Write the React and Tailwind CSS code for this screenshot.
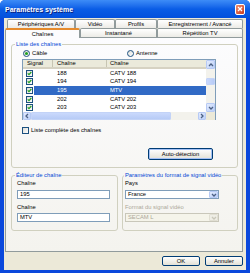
import React from 'react';

const Chevron = ({ dir, color = '#4d6185' }) => {
    const pts = { up: '1,4 3,2 5,4', down: '1,2 3,4 5,2', left: '4,1 2,3 4,5', right: '2,1 4,3 2,5' }[dir];
    return (
        <svg width="6" height="6" viewBox="0 0 6 6">
            <polyline points={pts} fill="none" stroke={color} strokeWidth="1.3" />
        </svg>
    );
};

const ScrollBtn = ({ dir, className }) => (
    <div className={`flex items-center justify-center rounded-[1px] border border-[#b7caf5] bg-gradient-to-br from-[#e3ebfd] to-[#bcd0f8] ${className}`}>
        <Chevron dir={dir} />
    </div>
);

const CheckBox = ({ checked }) => (
    <div className="w-[7px] h-[7px] shrink-0 border border-[#1c5180] bg-gradient-to-br from-[#dcdcd7] to-white flex items-center justify-center">
        {checked && (
            <svg width="5" height="5" viewBox="0 0 5 5">
                <polyline points="0.7,2.3 2,3.7 4.3,1" fill="none" stroke="#21a121" strokeWidth="1.2" />
            </svg>
        )}
    </div>
);

const Radio = ({ checked }) => (
    <div className="w-[7px] h-[7px] shrink-0 rounded-full border border-[#1c5180] bg-gradient-to-br from-[#dcdcd7] to-white flex items-center justify-center">
        {checked && <div className="w-[3px] h-[3px] rounded-full bg-[#21a121]" />}
    </div>
);

const Tab = ({ label, w, selected }) => (
    <div
        className={`${w} flex items-center justify-center rounded-t-[2px] border border-b-0 border-[#919b9c] ${selected
            ? 'relative z-10 h-[10px] -mb-[1px] border-t-2 border-t-[#e68b2c] bg-[#fcfcfe]'
            : 'h-[9px] bg-gradient-to-b from-white to-[#ecebe6]'}`}
    >
        {label}
    </div>
);

const Button = ({ label, w, focused }) => (
    <div
        className={`${w} h-full flex items-center justify-center rounded-[2px] border border-[#003c74] bg-gradient-to-b from-white to-[#e3e1d6] ${focused ? 'shadow-[inset_0_0_0_1px_#a4c1f5]' : ''}`}
    >
        {label}
    </div>
);

const rows = [
    { n: '188', name: 'CATV 188' },
    { n: '194', name: 'CATV 194' },
    { n: '195', name: 'MTV', sel: true },
    { n: '202', name: 'CATV 202' },
    { n: '203', name: 'CATV 203' },
];

const ChannelTable = () => (
    <div className="mt-[2px] w-[194px] h-[61px] border border-[#7f9db9] bg-white flex flex-col">
        <div className="flex flex-1">
            <div className="flex-1 flex flex-col">
                {/* header */}
                <div className="h-[9px] flex bg-[#ebeadb] border-b-2 border-[#d6d2c2]">
                    <div className="w-[30px] pl-[4px] border-r border-[#c7c5b2] flex items-center">Signal</div>
                    <div className="w-[54px] pl-[4px] border-r border-[#c7c5b2] flex items-center">Chaîne</div>
                    <div className="flex-1 pl-[3px] flex items-center">Chaîne</div>
                </div>
                {rows.map(r => (
                    <div key={r.n} className={`h-[8.6px] flex ${r.sel ? 'text-white' : ''}`}>
                        <div className="w-[30px] flex items-center">
                            <div className="pl-[3px] pr-[1px] bg-white h-full flex items-center">
                                <CheckBox checked />
                            </div>
                            <div className={`flex-1 h-full ${r.sel ? 'bg-[#316ac5]' : ''}`} />
                        </div>
                        <div className={`w-[54px] pl-[4px] flex items-center ${r.sel ? 'bg-[#316ac5]' : ''}`}>{r.n}</div>
                        <div className={`flex-1 pl-[3px] flex items-center ${r.sel ? 'bg-[#316ac5]' : ''}`}>{r.name}</div>
                    </div>
                ))}
            </div>
            {/* vertical scrollbar */}
            <div className="w-[9px] flex flex-col bg-[#f3f2ec]">
                <ScrollBtn dir="up" className="h-[9px]" />
                <div className="flex-1 flex flex-col pt-[9px]">
                    <div className="h-[7px] rounded-[1px] border border-[#c3d3f7] bg-gradient-to-r from-[#cad9fc] to-[#b7cbf6]" />
                </div>
                <ScrollBtn dir="down" className="h-[8.6px]" />
            </div>
        </div>
        {/* horizontal scrollbar */}
        <div className="h-[8px] flex bg-[#f3f2ec]">
            <ScrollBtn dir="left" className="w-[8px]" />
            <div className="flex-1 flex">
                <div className="w-[140px] rounded-[1px] border border-[#c3d3f7] bg-gradient-to-b from-[#cad9fc] to-[#b7cbf6]" />
            </div>
            <ScrollBtn dir="right" className="w-[8px]" />
            <div className="w-[9px] bg-[#ece9d8]" />
        </div>
    </div>
);

const Input = ({ value }) => (
    <div className="mt-[2px] w-[93px] h-[9px] border border-[#7f9db9] bg-white pl-[2px] flex items-center">{value}</div>
);

const Select = ({ value, disabled }) => (
    <div className={`mt-[2px] w-[94px] h-[9px] border flex items-center ${disabled ? 'border-[#c9c7ba] bg-[#f5f4ea] text-[#aca899]' : 'border-[#7f9db9] bg-white'}`}>
        <div className="flex-1 pl-[2px]">{value}</div>
        <div className={`w-[9px] h-full flex items-center justify-center rounded-[1px] border ${disabled ? 'border-[#e1dfd3] bg-[#eeede5]' : 'border-[#b7caf5] bg-gradient-to-br from-[#e3ebfd] to-[#bcd0f8]'}`}>
            <Chevron dir="down" color={disabled ? '#c9c7ba' : '#4d6185'} />
        </div>
    </div>
);

export default function App() {
    return (
        <div className="w-[250px] h-[273px] flex flex-col overflow-hidden rounded-t-[5px] bg-[#0a48dc] font-['Liberation_Sans',Arial,sans-serif] text-[5.8px] leading-[7px] text-black">
            {/* title bar */}
            <div className="h-[18px] shrink-0 flex items-center justify-between px-[5px] bg-gradient-to-b from-[#3d8cf7] via-[#0a5de6] to-[#0350dc]">
                <span className="text-[7px] font-bold text-white [text-shadow:1px_1px_0_#0a1e7a]">Paramètres système</span>
                <div className="w-[10px] h-[11px] rounded-[2px] border border-white bg-gradient-to-br from-[#f08c6c] to-[#c8381a] flex items-center justify-center">
                    <svg width="6" height="6" viewBox="0 0 6 6">
                        <path d="M1 1L5 5M5 1L1 5" stroke="white" strokeWidth="1.3" />
                    </svg>
                </div>
            </div>

            <div className="flex-1 mx-[4px] mb-[3px] bg-[#ece9d8] flex flex-col">
                {/* tabs */}
                <div className="mt-[1px] ml-[3px] flex items-end h-[9px]">
                    <Tab label="Périphériques A/V" w="w-[68px]" />
                    <Tab label="Vidéo" w="w-[40px]" />
                    <Tab label="Profils" w="w-[42px]" />
                    <Tab label="Enregistrement / Avancé" w="w-[86px]" />
                </div>
                <div className="ml-[1px] flex items-end h-[9px]">
                    <Tab label="Chaînes" w="w-[75px]" selected />
                    <Tab label="Instantané" w="w-[77px]" />
                    <Tab label="Répétition TV" w="w-[86px]" />
                </div>

                {/* tab page */}
                <div className="ml-[1px] w-[238px] h-[215px] border border-[#919b9c] bg-gradient-to-b from-[#fcfcfe] to-[#f4f3ee] flex flex-col">
                    <fieldset className="mt-[3px] ml-[5px] w-[227px] border border-[#d0d0bf] rounded-[3px]">
                        <legend className="ml-[3px] px-[1px] text-[#0046d5]">Liste des chaînes</legend>
                        <div className="pl-[10px] pb-[7px] flex flex-col">
                            <div className="mt-[1px] h-[8px] flex items-center">
                                <div className="w-[105px] pl-[1px] flex items-center gap-[2px]">
                                    <Radio checked />
                                    <span>Câble</span>
                                </div>
                                <div className="flex items-center gap-[2px]">
                                    <Radio />
                                    <span>Antenne</span>
                                </div>
                            </div>
                            <ChannelTable />
                            <div className="mt-[6px] h-[8px] flex items-center gap-[2px]">
                                <CheckBox />
                                <span>Liste complète des chaînes</span>
                            </div>
                            <div className="mt-[14px] h-[12px] flex justify-end pr-[24px]">
                                <Button label="Auto-détection" w="w-[65px]" focused />
                            </div>
                        </div>
                    </fieldset>

                    <div className="mt-[4px] ml-[5px] flex gap-[4px]">
                        <fieldset className="w-[107px] border border-[#d0d0bf] rounded-[3px]">
                            <legend className="ml-[3px] px-[1px] text-[#0046d5]">Éditeur de chaîne</legend>
                            <div className="pl-[5px] pb-[8px] flex flex-col">
                                <div className="mt-[1px] h-[7px]">Chaîne</div>
                                <div className="mt-[1px]"><Input value="195" /></div>
                                <div className="mt-[5px] h-[7px]">Chaîne</div>
                                <Input value="MTV" />
                            </div>
                        </fieldset>
                        <fieldset className="w-[116px] border border-[#d0d0bf] rounded-[3px]">
                            <legend className="ml-[1px] px-[1px] text-[#0046d5]">Paramètres du format de signal vidéo</legend>
                            <div className="pl-[2px] pb-[8px] flex flex-col">
                                <div className="mt-[1px] h-[7px]">Pays</div>
                                <div className="mt-[1px]"><Select value="France" /></div>
                                <div className="mt-[5px] h-[7px] text-[#aca899]">Format du signal vidéo</div>
                                <Select value="SECAM L" disabled />
                            </div>
                        </fieldset>
                    </div>
                </div>

                {/* dialog buttons */}
                <div className="mt-[4px] h-[10px] flex justify-end gap-[5px] pr-[3px]">
                    <Button label="OK" w="w-[38px]" />
                    <Button label="Annuler" w="w-[38px]" />
                </div>
            </div>
        </div>
    );
}
